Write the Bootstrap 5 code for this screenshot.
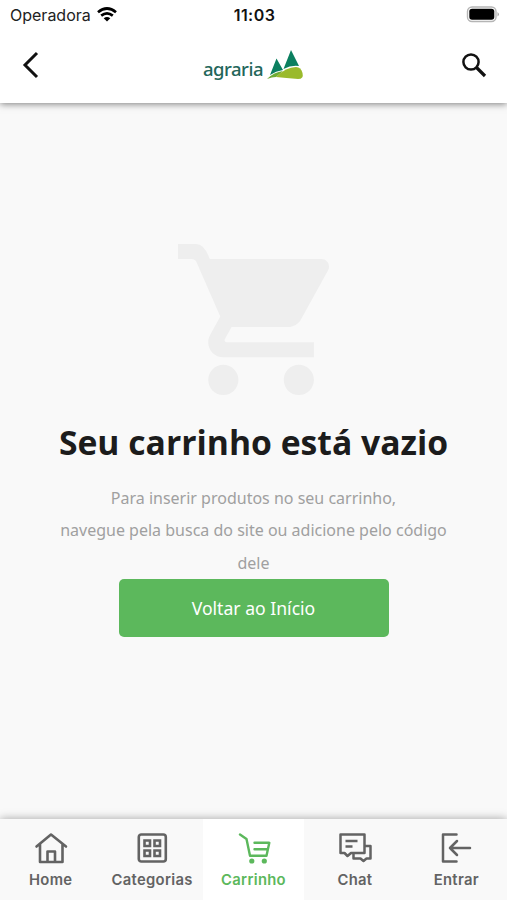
<!DOCTYPE html>
<html lang="pt-BR">
<head>
<meta charset="utf-8">
<meta name="viewport" content="width=device-width, initial-scale=1">
<title>Carrinho</title>
<link href="https://cdn.jsdelivr.net/npm/bootstrap@5.3.0/dist/css/bootstrap.min.css" rel="stylesheet">
<style>
body { background: #f9f9f9; font-family: "Noto Sans", sans-serif; height: 900px; overflow: hidden; }
svg { display: block; flex: none; }
.app-header { height: 103px; box-shadow: 0 1px 7px rgba(0,0,0,.5); z-index: 1; }
.status-bar { height: 30px; font-family: Inter, sans-serif; font-size: 16px; line-height: 30px; color: #222; padding: 0 8px 0 10px; }
.status-side { flex: 1 1 0; gap: 6px; }
.status-side svg { margin-top: -2px; }
.clock { font-weight: 600; color: #111; letter-spacing: .45px; }
.title-bar { height: 70px; padding: 0 20px 0 22px; }
.brand-name { font-family: "Noto Sans", sans-serif; font-size: 18.5px; line-height: 26px; color: #23665a; font-weight: 500; letter-spacing: -.5px; padding-top: 8px; }
.brand-mark { margin-left: 3px; }
.cart-art { margin-top: 141px; }
.empty-title { font-family: "Open Sans", sans-serif; font-size: 33.7px; line-height: 46px; font-weight: 700; color: #1c1c1c; margin-top: 24px; }
.empty-text { font-size: 16px; line-height: 32.4px; color: #a0a0a0; width: 400px; margin-top: 17px; }
.btn-start { width: 270px; height: 58px; background: #5cb85c; color: #fff; font-size: 17.6px; border: 0; border-radius: 5px; }
.tab-bar { height: 81px; background: #f9f9f9; box-shadow: 0 0 9px rgba(0,0,0,.35); z-index: 1; }
.tab-item { color: #636363; font-family: Inter, sans-serif; font-size: 14.8px; font-weight: 600; line-height: 20px; padding-top: 11px; gap: 4px; letter-spacing: .3px; }
.tab-item.active { color: #5cb85c; background: #fff; }
</style>
</head>
<body class="d-flex flex-column">
<header class="app-header bg-white position-relative">
  <div class="status-bar d-flex align-items-center">
    <div class="status-side d-flex align-items-center">
      <span>Operadora</span>
      <svg width="20" height="15" viewBox="0 0 20 15" fill="none" stroke="#000" stroke-width="2.7"><path d="M1 5.2Q10-2.2 19 5.2M4.2 8.6Q10 4 15.8 8.6"/><path d="M6.7 11.3Q10 8.5 13.3 11.3L10 14.6z" fill="#000" stroke="none"/></svg>
    </div>
    <span class="clock">11:03</span>
    <div class="status-side d-flex justify-content-end">
      <svg width="33" height="17" viewBox="0 0 33 17"><rect x="1.500" y="1" width="28.5" height="14.5" rx="4.5" fill="#fff" stroke="#b5b5b5" stroke-width="1.4"/><rect x="3.300" y="2.8" width="25" height="11" rx="2.8"/><path d="M31.500 6q3 2.3 0 4.6z" fill="#aaa"/></svg>
    </div>
  </div>
  <div class="title-bar d-flex align-items-center justify-content-between">
    <a href="#" aria-label="Voltar"><svg width="24" height="28" viewBox="0 0 24 28" fill="none" stroke="#111" stroke-width="3"><path d="M15 2L3 14L15 26"/></svg></a>
    <div class="d-flex align-items-center">
      <span class="brand-name">agraria</span>
      <svg class="brand-mark" width="38" height="32" viewBox="0 0 38 32"><path d="M10.500 9.500L17 21Q10 22 4 26Z" fill="#0b7f5f"/><path d="M25 1L33 17Q25 16 17.500 20Z" fill="#0b7f5f"/><path d="M1 30Q8 23 17 22L10 28Q6 28 1 30Z" fill="#6dab35"/><path d="M10 28Q20 18 30 18Q35 18 36.500 24Q38 30 32 30Q20 29 10 28Z" fill="#9aba2c"/></svg>
    </div>
    <a href="#" aria-label="Buscar"><svg width="26" height="26" viewBox="0 0 26 26" fill="none" stroke="#111"><circle cx="10" cy="10" r="7.600" stroke-width="2.500"/><path d="M15.500 15.500L24 24" stroke-width="3.200"/></svg></a>
  </div>
</header>
<main class="flex-grow-1 d-flex flex-column align-items-center text-center">
  <svg class="cart-art" width="151" height="151" viewBox="1 2 20 20" fill="#eee"><path d="M7 18c-1.100 0-1.990.9-1.990 2S5.900 22 7 22s2-.9 2-2-.9-2-2-2zM1 2v2h1.800q.5 0 .7.500l3.100 7.090-1.350 2.450c-.16.280-.250.610-.250.960 0 1.100.9 2 2 2h12v-2H7.420c-.14 0-.250-.110-.250-.250l.030-.120.9-1.630h7.450c.75 0 1.410-.410 1.750-1.030l3.580-6.490c.08-.14.120-.310.120-.480 0-.550-.450-1-1-1H5.210Q4.500 2 3.400 2H1zm16 16c-1.100 0-1.990.9-1.990 2s.890 2 1.990 2 2-.9 2-2-.9-2-2-2z"/></svg>
  <h1 class="empty-title mb-0">Seu carrinho está vazio</h1>
  <p class="empty-text mb-0">Para inserir produtos no seu carrinho,<br>navegue pela busca do site ou adicione pelo código dele</p>
  <a href="#" class="btn btn-start d-flex align-items-center justify-content-center">Voltar ao Início</a>
</main>
<nav class="tab-bar d-flex position-relative">
  <a href="#" class="tab-item col d-flex flex-column align-items-center text-decoration-none">
    <svg width="34" height="36" viewBox="0 0 34 36" fill="none" stroke="currentColor" stroke-width="2.600" stroke-linejoin="round" stroke-linecap="round"><path d="M2.500 16.500L17 4.500L32 16.500M6 14V32H28.500V14M13.500 32V21.500H21V32"/></svg>
    <span>Home</span></a>
  <a href="#" class="tab-item col d-flex flex-column align-items-center text-decoration-none">
    <svg width="34" height="36" viewBox="0 0 34 36" fill="none" stroke="currentColor" stroke-width="2.600"><rect x="3.800" y="4.500" width="27" height="27" rx="2.500"/><path d="M9.500 10.500h5.500v5.500h-5.500zM19.500 10.500h5.500v5.500h-5.500zM9.500 20.500h5.500v5.500h-5.500zM19.500 20.500h5.500v5.500h-5.500z"/></svg>
    <span>Categorias</span></a>
  <a href="#" class="tab-item active col d-flex flex-column align-items-center text-decoration-none" aria-current="page">
    <svg width="34" height="36" viewBox="0 0 34 36" fill="none" stroke="currentColor" stroke-width="2.400" stroke-linejoin="round" stroke-linecap="round"><path d="M3 4.500L9.500 9L13 25.800H29.500L32.300 12.800H17.500M17.500 19.300H30"/><circle cx="14.800" cy="31" r="2.600" fill="currentColor" stroke="none"/><circle cx="27.300" cy="31" r="2.600" fill="currentColor" stroke="none"/></svg>
    <span>Carrinho</span></a>
  <a href="#" class="tab-item col d-flex flex-column align-items-center text-decoration-none">
    <svg width="34" height="36" viewBox="0 0 34 36" fill="none" stroke="currentColor" stroke-width="2.500" stroke-linejoin="round"><path d="M2.500 4.500H26.500V23H13L9.500 26L6.500 23H2.500ZM26.500 16H32.500V28.500H28.500L25.500 31L22.500 28.500H15.500V23M7.500 11H19.500M7.500 16.500H14.500"/></svg>
    <span>Chat</span></a>
  <a href="#" class="tab-item col d-flex flex-column align-items-center text-decoration-none">
    <svg width="34" height="36" viewBox="0 0 34 36" fill="none" stroke="currentColor" stroke-width="2.500" stroke-linejoin="round" stroke-linecap="round"><path d="M17.500 4.500H4V31.500H17.500M31 18H11M18 11L11 18L18 25"/></svg>
    <span>Entrar</span></a>
</nav>
<script src="https://cdn.jsdelivr.net/npm/bootstrap@5.3.0/dist/js/bootstrap.bundle.min.js"></script>
</body>
</html>
